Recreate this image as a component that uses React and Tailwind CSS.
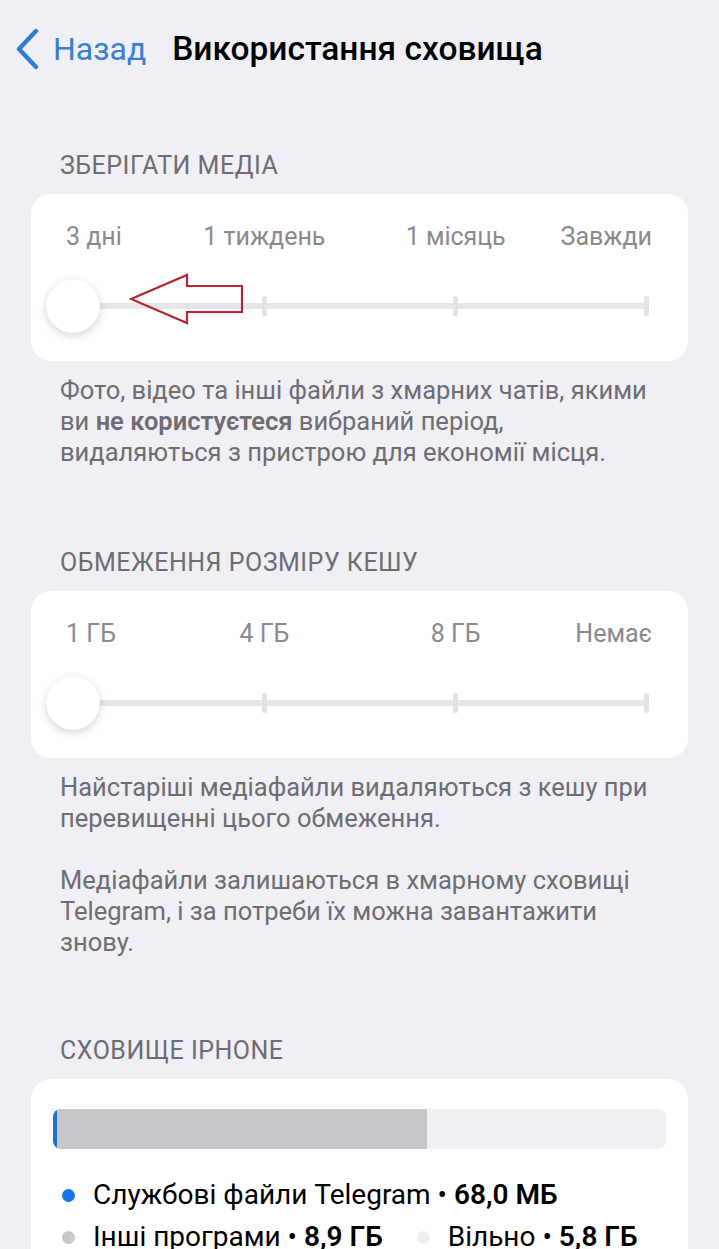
const retentionStops = ['3 дні', '1 тиждень', '1 місяць', 'Завжди']
const cacheStops = ['1 ГБ', '4 ГБ', '8 ГБ', 'Немає']

function SectionHeader({ children }) {
  return (
    <div className="px-[60px] h-[30px] flex items-center text-[25px] text-[#6d6d72] tracking-[0.5px]">
      {children}
    </div>
  )
}

function StepSlider({ stops, pointer }) {
  return (
    <div className="mx-[31px] mt-[13px] rounded-[20px] bg-white pt-[28px] pb-[27px]">
      {/* scale labels: zero-width anchors spread over the track */}
      <div className="mx-[42px] mr-[41px] h-[30px] flex justify-between items-center text-[25px] text-[#8a8a8e]">
        {stops.map((s, i) => (
          <div
            key={s}
            className={`w-0 flex whitespace-nowrap ${
              i === 0 ? 'justify-start' : i === stops.length - 1 ? 'justify-end' : 'justify-center'
            }`}
          >
            <span className={i === 0 ? '-ml-[7px]' : i === stops.length - 1 ? '-mr-[5px]' : ''}>{s}</span>
          </div>
        ))}
      </div>
      <div className="relative mt-[26px] ml-[42px] mr-[41px] h-[56px] flex items-center">
        <div className="relative w-full h-[6px] rounded-full bg-[#e6e6ea] flex justify-between items-center">
          {stops.map((s, i) => (
            <div key={s} className="w-0 flex justify-center">
              {i > 0 && <div className="w-[5px] h-[20px] rounded-full bg-[#e3e3e7] shrink-0" />}
            </div>
          ))}
        </div>
        <div className="absolute left-[-27px] top-[1px] w-[54px] h-[54px] rounded-full bg-white shadow-[0_3px_8px_rgba(0,0,0,0.16),0_0_1px_rgba(0,0,0,0.08)]" />
        {pointer && (
          <svg className="absolute left-[56px] top-[-5px]" width="116" height="52" viewBox="0 0 116 52" fill="none">
            <path
              d="M2 26 L58 2 L58 13 L113 13 L113 39 L58 39 L58 50 Z"
              stroke="#b3262f"
              strokeWidth="2.2"
              strokeLinejoin="miter"
            />
          </svg>
        )}
      </div>
    </div>
  )
}

function Note({ children, className = '' }) {
  return (
    <p className={`px-[60px] text-[25.5px] leading-[31px] text-[#6d6d72] whitespace-nowrap ${className}`}>
      {children}
    </p>
  )
}

function Legend({ color, label, value }) {
  return (
    <div className="flex items-center">
      <span className={`w-[13px] h-[13px] rounded-full ${color}`} />
      <span className="ml-[18px] whitespace-nowrap">
        {label} • <span className="font-semibold">{value}</span>
      </span>
    </div>
  )
}

export default function App() {
  return (
    <div className="min-h-[1249px] bg-[#f0eff5] font-['Roboto',sans-serif] overflow-hidden">
      <div className="h-[100px] flex items-center pl-[14px] pb-[2px]">
        <svg width="26" height="42" viewBox="0 0 26 42" fill="none">
          <path d="M22 3 L5 21 L22 39" stroke="#2f7bd8" strokeWidth="4.4" strokeLinecap="round" strokeLinejoin="round" />
        </svg>
        <span className="ml-[13px] text-[32px] text-[#3a7fd2]">Назад</span>
        <span className="ml-[26px] text-[33.5px] font-medium text-black">Використання сховища</span>
      </div>

      <div className="mt-[51px]">
        <SectionHeader>ЗБЕРІГАТИ МЕДІА</SectionHeader>
        <StepSlider stops={retentionStops} pointer />
        <Note className="mt-[14px]">
          Фото, відео та інші файли з хмарних чатів, якими
          <br />
          ви <span className="font-semibold">не користуєтеся</span> вибраний період,
          <br />
          видаляються з пристрою для економії місця.
        </Note>
      </div>

      <div className="mt-[80px]">
        <SectionHeader>ОБМЕЖЕННЯ РОЗМІРУ КЕШУ</SectionHeader>
        <StepSlider stops={cacheStops} />
        <Note className="mt-[14px]">
          Найстаріші медіафайли видаляються з кешу при
          <br />
          перевищенні цього обмеження.
        </Note>
        <Note className="mt-[31px]">
          Медіафайли залишаються в хмарному сховищі
          <br />
          Telegram, і за потреби їх можна завантажити
          <br />
          знову.
        </Note>
      </div>

      <div className="mt-[78px]">
        <SectionHeader>СХОВИЩЕ IPHONE</SectionHeader>
        <div className="mx-[31px] mt-[13px] rounded-t-[20px] bg-white pt-[30px] px-[22px] pb-[40px]">
          <div className="h-[40px] rounded-[8px] bg-[#f0f0f5] flex overflow-hidden">
            <div className="w-[4px] bg-[#1f6fd6]" />
            <div className="w-[370px] bg-[#c7c7cb]" />
          </div>
          <div className="mt-[25px] pl-[9px] text-[28px] leading-[42px] text-black flex flex-col">
            <Legend color="bg-[#1a73e8]" label="Службові файли Telegram" value="68,0 МБ" />
            <div className="flex gap-[34px]">
              <Legend color="bg-[#c7c7cb]" label="Інші програми" value="8,9 ГБ" />
              <Legend color="bg-[#eeeef3]" label="Вільно" value="5,8 ГБ" />
            </div>
          </div>
        </div>
      </div>
    </div>
  )
}
